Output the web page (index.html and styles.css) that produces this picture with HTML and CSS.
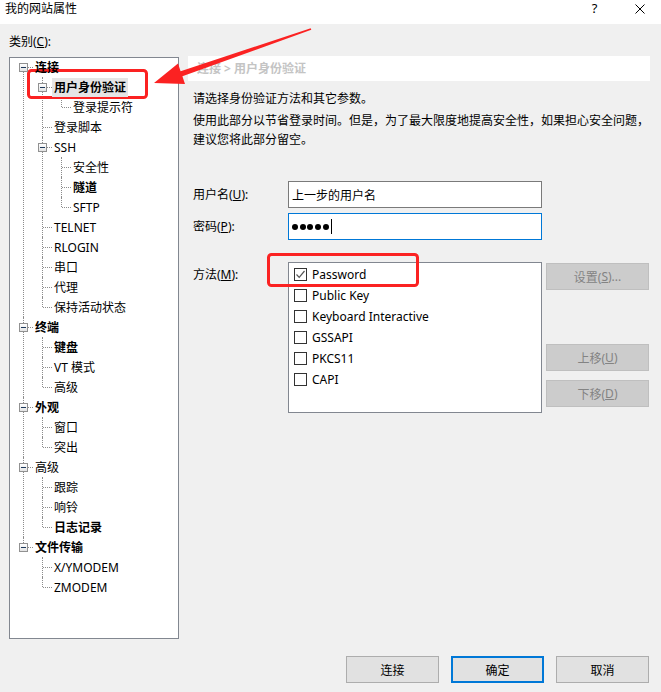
FILE: index.html
```html
<!DOCTYPE html>
<html lang="zh-CN">
<head>
<meta charset="utf-8">
<title>我的网站属性</title>
<link rel="stylesheet" href="styles.css">
</head>
<body>
<div class="window">
  <header class="titlebar">
    <span class="title">我的网站属性</span>
    <span class="cap help">?</span>
    <span class="cap close"><svg width="10" height="10" viewBox="0 0 10 10"><path d="M0.5 0.5L9.5 9.5M9.5 0.5L0.5 9.5" stroke="#000" stroke-width="1" fill="none"/></svg></span>
  </header>

  <div class="content">
    <aside class="category">
      <div class="cat-label">类别(<u>C</u>):</div>
      <div class="tree">
        <ul>
          <li><div class="row has"><i class="tg"></i><span class="lbl b">连接</span></div>
            <ul>
              <li><div class="row has"><i class="tg"></i><span class="lbl b sel">用户身份验证</span></div>
                <ul>
                  <li><div class="row"><span class="lbl">登录提示符</span></div></li>
                </ul>
              </li>
              <li><div class="row"><span class="lbl">登录脚本</span></div></li>
              <li><div class="row has"><i class="tg"></i><span class="lbl">SSH</span></div>
                <ul>
                  <li><div class="row"><span class="lbl">安全性</span></div></li>
                  <li><div class="row"><span class="lbl b">隧道</span></div></li>
                  <li><div class="row"><span class="lbl">SFTP</span></div></li>
                </ul>
              </li>
              <li><div class="row"><span class="lbl">TELNET</span></div></li>
              <li><div class="row"><span class="lbl">RLOGIN</span></div></li>
              <li><div class="row"><span class="lbl">串口</span></div></li>
              <li><div class="row"><span class="lbl">代理</span></div></li>
              <li><div class="row"><span class="lbl">保持活动状态</span></div></li>
            </ul>
          </li>
          <li><div class="row has"><i class="tg"></i><span class="lbl b">终端</span></div>
            <ul>
              <li><div class="row"><span class="lbl b">键盘</span></div></li>
              <li><div class="row"><span class="lbl">VT 模式</span></div></li>
              <li><div class="row"><span class="lbl">高级</span></div></li>
            </ul>
          </li>
          <li><div class="row has"><i class="tg"></i><span class="lbl b">外观</span></div>
            <ul>
              <li><div class="row"><span class="lbl">窗口</span></div></li>
              <li><div class="row"><span class="lbl">突出</span></div></li>
            </ul>
          </li>
          <li><div class="row has"><i class="tg"></i><span class="lbl">高级</span></div>
            <ul>
              <li><div class="row"><span class="lbl">跟踪</span></div></li>
              <li><div class="row"><span class="lbl">响铃</span></div></li>
              <li><div class="row"><span class="lbl b">日志记录</span></div></li>
            </ul>
          </li>
          <li><div class="row has"><i class="tg"></i><span class="lbl b">文件传输</span></div>
            <ul>
              <li><div class="row"><span class="lbl">X/YMODEM</span></div></li>
              <li><div class="row"><span class="lbl">ZMODEM</span></div></li>
            </ul>
          </li>
        </ul>
      </div>
    </aside>

    <section class="panel">
      <div class="crumb">连接 &gt; 用户身份验证</div>
      <p class="desc">请选择身份验证方法和其它参数。</p>
      <p class="desc2">使用此部分以节省登录时间。但是，为了最大限度地提高安全性，如果担心安全问题，<br>建议您将此部分留空。</p>

      <div class="field first">
        <label>用户名(<u>U</u>):</label>
        <div class="input">上一步的用户名</div>
      </div>
      <div class="field">
        <label>密码(<u>P</u>):</label>
        <div class="input focus"><i class="dot"></i><i class="dot"></i><i class="dot"></i><i class="dot"></i><i class="dot"></i><i class="caret"></i></div>
      </div>

      <div class="method">
        <label>方法(<u>M</u>):</label>
        <div class="list">
          <div class="opt"><span class="cb"><svg width="11" height="11" viewBox="0 0 11 11"><path d="M1.5 5.5L4.2 8.3L9.5 2" stroke="#555" stroke-width="1.2" fill="none"/></svg></span>Password</div>
          <div class="opt"><span class="cb"></span>Public Key</div>
          <div class="opt"><span class="cb"></span>Keyboard Interactive</div>
          <div class="opt"><span class="cb"></span>GSSAPI</div>
          <div class="opt"><span class="cb"></span>PKCS11</div>
          <div class="opt"><span class="cb"></span>CAPI</div>
        </div>
        <div class="side">
          <button class="btn dis set">设置(<u>S</u>)...</button>
          <button class="btn dis up">上移(<u>U</u>)</button>
          <button class="btn dis down">下移(<u>D</u>)</button>
        </div>
      </div>
    </section>
  </div>

  <footer class="actions">
    <button class="btn">连接</button>
    <button class="btn default">确定</button>
    <button class="btn">取消</button>
  </footer>

  <svg class="annot" width="661" height="692" viewBox="0 0 661 692">
    <rect x="28.5" y="70.5" width="118" height="27" rx="3" fill="none" stroke="#fb2222" stroke-width="3"/>
    <rect x="268.5" y="254.5" width="149" height="31" rx="3" fill="none" stroke="#fb2222" stroke-width="3"/>
    <polygon points="154,83 178,63.5 180.6,71.3 310.7,28.2 311.3,29.8 182.4,76.3 185,84" fill="#fb2222"/>
  </svg>
</div>
</body>
</html>
```

FILE: styles.css
```css
* { box-sizing: border-box; }
html, body { margin: 0; padding: 0; }
body {
  width: 661px;
  height: 692px;
  overflow: hidden;
  background: #f0f0f0;
  font-family: "Noto Sans", "Noto Sans CJK SC", sans-serif;
  font-size: 12px;
  color: #000;
}
.window { position: relative; width: 661px; height: 692px; }

/* title bar */
.titlebar {
  height: 24px;
  background: #fff;
  display: flex;
  align-items: flex-start;
  padding-left: 5px;
}
.title { flex: 1; height: 17px; line-height: 17px; }
.cap {
  width: 46px;
  height: 17px;
  display: flex;
  align-items: center;
  justify-content: center;
}
.help { padding-left: 5px; font-size: 13px; line-height: 17px; }
.close { padding-left: 3px; }

/* main content */
.content { display: flex; height: 615px; }
.category { width: 170px; margin-left: 9px; padding-top: 10px; }
.cat-label { height: 16px; line-height: 16px; }

.tree {
  margin-top: 7px;
  height: 582px;
  background: #fff;
  border: 1px solid #828790;
  overflow: hidden;
}
.tree ul { list-style: none; margin: 0; padding: 0; }
.tree > ul { margin-top: -1px; }
.tree ul ul { padding-left: 19px; }
.tree li { position: relative; }
.tree li::before {
  content: "";
  position: absolute;
  left: 13px;
  top: 0;
  bottom: 0;
  border-left: 1px dotted #8c8c8c;
}
.tree li:last-child::before { bottom: auto; height: 10px; }
.tree > ul > li:first-child::before { top: 10px; }
.tree li::after {
  content: "";
  position: absolute;
  left: 14px;
  top: 10px;
  width: 9px;
  border-top: 1px dotted #8c8c8c;
}
.row {
  position: relative;
  z-index: 1;
  display: flex;
  align-items: center;
  height: 20px;
  padding-left: 23px;
}
.row.has { padding-left: 9px; }
.tg {
  width: 9px;
  height: 9px;
  border: 1px solid #919191;
  background: linear-gradient(#ffffff, #e3e3e3);
  display: flex;
  align-items: center;
  justify-content: center;
  margin-right: 5px;
}
.tg::before { content: ""; width: 5px; height: 1px; background: #1e395b; }
.lbl { padding: 0 2px; line-height: 19px; white-space: nowrap; }
.lbl.b { font-weight: bold; }
.lbl.sel { background: #e5e5e5; }

/* right panel */
.panel { width: 462px; margin-left: 9px; padding-top: 32px; }
.crumb {
  height: 25px;
  line-height: 25px;
  background: #fff;
  padding-left: 9px;
  color: #c4c4c4;
  font-weight: bold;
}
.desc { margin: 8px 0 0; padding-left: 5px; line-height: 20px; white-space: nowrap; }
.desc2 { margin: 2px 0 0; padding-left: 5px; line-height: 19px; white-space: nowrap; }

.field { display: flex; align-items: center; margin-top: 5px; padding-left: 5px; }
.field.first { margin-top: 32px; }
.field label { width: 95px; line-height: 20px; }
.input {
  width: 254px;
  height: 27px;
  border: 1px solid #7a7a7a;
  background: #fff;
  display: flex;
  align-items: center;
  padding-left: 3px;
}
.input.focus { border-color: #0078d7; }
.dot {
  width: 6px;
  height: 6px;
  border-radius: 50%;
  background: #000;
  margin-right: 1.7px;
}
.caret { width: 1px; height: 15px; background: #000; margin-left: 1px; }

.method { display: flex; align-items: flex-start; margin-top: 22px; padding-left: 5px; }
.method > label { width: 95px; padding-top: 3px; line-height: 20px; }
.list {
  width: 254px;
  height: 151px;
  border: 1px solid #828790;
  background: #fff;
  padding-top: 1px;
}
.opt { display: flex; align-items: center; height: 21px; padding-left: 5px; white-space: nowrap; }
.cb {
  width: 13px;
  height: 13px;
  border: 1px solid #333;
  background: #fff;
  margin-right: 5px;
  display: flex;
  align-items: center;
  justify-content: center;
  flex: none;
}
.side { margin-left: 4px; width: 103px; display: flex; flex-direction: column; }

.btn {
  font: inherit;
  color: #000;
  height: 27px;
  border: 1px solid #adadad;
  background: #e1e1e1;
  display: flex;
  align-items: center;
  justify-content: center;
  padding: 0;
  margin: 0;
}
.btn.dis { background: #cccccc; border-color: #bfbfbf; color: #838383; }
.side .set { margin-top: 1px; }
.side .up { margin-top: 54px; }
.side .down { margin-top: 9px; }

.actions {
  display: flex;
  justify-content: flex-end;
  gap: 12px;
  padding: 17px 12px 0 0;
}
.actions .btn { width: 93px; }
.btn.default { border: 2px solid #0078d7; }

.annot { position: absolute; left: 0; top: 0; pointer-events: none; }
```
